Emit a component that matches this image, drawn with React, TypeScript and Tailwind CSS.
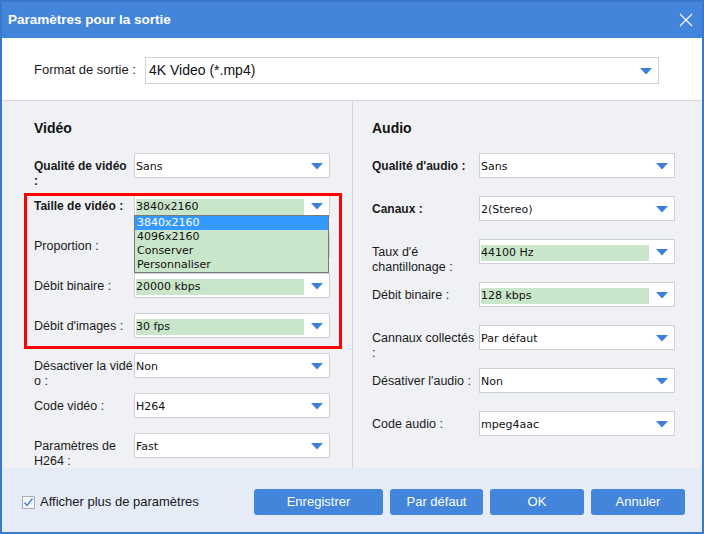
import React from 'react';

const sans = "font-['Liberation_Sans',Arial,sans-serif]";
const tahoma = "font-['DejaVu_Sans',Verdana,sans-serif]";

const Arrow = ({ className = '' }: { className?: string }) => (
  <svg className={className} width="12" height="7" viewBox="0 0 12 7">
    <polygon points="0,0 12,0 6,6.5" fill="#3d7fdb" />
  </svg>
);

type SelectProps = { value: string; green?: boolean };

const Select = ({ value, green }: SelectProps) => (
  <div className="relative flex h-[25px] w-[196px] shrink-0 items-center border border-[#cdd1d6] bg-white">
    {green && <div className="absolute left-[1px] top-[5px] h-[16px] w-[168px] bg-[#c9e6ca]" />}
    {value && <span className={`relative pl-[1px] pt-[3px] text-[11px] text-[#111] ${tahoma}`}>{value}</span>}
    <Arrow className="absolute right-[6px] top-[9px]" />
  </div>
);

type RowProps = {
  label: React.ReactNode;
  value: string;
  green?: boolean;
  bold?: boolean;
  labelW: number;
  children?: React.ReactNode;
};

const Row = ({ label, value, green, bold, labelW, children }: RowProps) => (
  <div className={`relative flex h-[25px] items-start ${children ? 'z-10' : ''}`}>
    <div
      className={`shrink-0 pt-[6px] text-[12.5px] leading-[15px] text-[#1a1a1a] ${bold ? 'font-bold text-[12px]' : ''}`}
      style={{ width: labelW }}
    >
      {label}
    </div>
    <Select value={value} green={green} />
    {children}
  </div>
);

const Button = ({ children, w }: { children: React.ReactNode; w: string }) => (
  <button className={`h-[26px] ${w} rounded-[3px] bg-[#4385da] text-[13px] text-white`}>{children}</button>
);

export default function App() {
  return (
    <div className={`flex h-[534px] w-[704px] flex-col border-2 border-[#3b78cc] bg-white ${sans}`}>
      {/* Title bar */}
      <div className="flex h-[36px] shrink-0 items-center justify-between bg-[#4385da] pl-[6px] pr-[9px]">
        <span className="text-[13.5px] font-bold text-white">Paramètres pour la sortie</span>
        <svg width="14" height="14" viewBox="0 0 14 14">
          <path d="M1 1L13 13M13 1L1 13" stroke="white" strokeWidth="1.1" />
        </svg>
      </div>

      {/* Format */}
      <div className="flex h-[63px] shrink-0 items-start border-b border-[#d9dbe0] bg-white pl-[32px] pt-[19px]">
        <div className="w-[111px] pt-[5px] text-[13px] leading-[16px] text-[#1a1a1a]">Format de sortie :</div>
        <div className="relative flex h-[27px] w-[514px] items-center border border-[#cdd1d6] bg-white pl-[3px]">
          <span className="text-[14px] text-[#111]">4K Video (*.mp4)</span>
          <Arrow className="absolute right-[6px] top-[10px]" />
        </div>
      </div>

      {/* Panels */}
      <div className="flex h-[367px] shrink-0">
        <div className="relative w-[351px] border-r border-[#d2d4d8] bg-[#f0f1f5] pl-[32px] pt-[18px]">
          <div className="h-[18px] text-[14px] font-bold leading-[18px] text-[#111]">Vidéo</div>
          <div className="mt-[16px] flex flex-col gap-[15px]">
            <Row bold labelW={100} value="Sans" label={<>Qualité de vidéo<br />:</>} />
            <Row bold labelW={100} value="3840x2160" green label="Taille de vidéo :">
              <div className={`absolute left-[100px] top-[22px] w-[195px] border border-[#7a7a7a] bg-[#c9e6ca] text-[11px] leading-[14px] text-[#111] ${tahoma}`}>
                <div className="bg-[#3399ff] pl-[2px] text-white">3840x2160</div>
                <div className="pl-[2px]">4096x2160</div>
                <div className="pl-[2px]">Conserver</div>
                <div className="pl-[2px]">Personnaliser</div>
              </div>
            </Row>
            <Row labelW={100} value="" green label="Proportion :" />
            <Row labelW={100} value="20000 kbps" green label="Débit binaire :" />
            <Row labelW={100} value="30 fps" green label="Débit d'images :" />
            <Row labelW={100} value="Non" label={<>Désactiver la vidé<br />o :</>} />
            <Row labelW={100} value="H264" label="Code vidéo :" />
            <Row labelW={100} value="Fast" label={<>Paramètres de<br />H264 :</>} />
          </div>
          {/* highlight annotation */}
          <div className="pointer-events-none absolute left-[22px] top-[92px] z-20 h-[156px] w-[318px] border-[3px] border-[#ff0000]" />
        </div>

        <div className="flex-1 bg-[#f0f1f5] pl-[19px] pt-[18px]">
          <div className="h-[18px] text-[14px] font-bold leading-[18px] text-[#111]">Audio</div>
          <div className="mt-[16px] flex flex-col gap-[18px]">
            <Row bold labelW={107} value="Sans" label="Qualité d'audio :" />
            <Row bold labelW={107} value="2(Stereo)" label="Canaux :" />
            <Row labelW={107} value="44100 Hz" green label={<>Taux d'é<br />chantillonage :</>} />
            <Row labelW={107} value="128 kbps" green label="Débit binaire :" />
            <Row labelW={107} value="Par défaut" label={<>Cannaux collectés<br />:</>} />
            <Row labelW={107} value="Non" label="Désativer l'audio :" />
            <Row labelW={107} value="mpeg4aac" label="Code audio :" />
          </div>
        </div>
      </div>

      {/* Footer */}
      <div className="flex flex-1 items-center bg-[#e5ebf7] pl-[20px] pr-[17px] pt-[4px]">
        <div className="flex items-center gap-[5px]">
          <svg width="13" height="13" viewBox="0 0 13 13">
            <rect x="0.5" y="0.5" width="12" height="12" fill="#f4f6fa" stroke="#a9adb3" />
            <path d="M2.5 6.5L5 9.5L10.5 2.5" stroke="#3d7fdb" strokeWidth="1.3" fill="none" />
          </svg>
          <span className="text-[13px] text-[#1a1a1a]">Afficher plus de paramètres</span>
        </div>
        <div className="ml-auto flex gap-[7px]">
          <Button w="w-[129px]">Enregistrer</Button>
          <Button w="w-[93px]">Par défaut</Button>
          <Button w="w-[94px]">OK</Button>
          <Button w="w-[94px]">Annuler</Button>
        </div>
      </div>
    </div>
  );
}
